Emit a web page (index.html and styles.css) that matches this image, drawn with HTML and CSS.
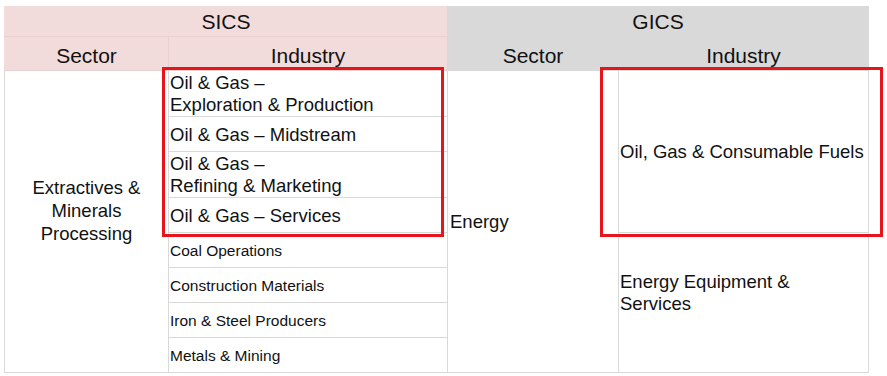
FILE: index.html
```html
<!DOCTYPE html>
<html>
<head>
<meta charset="utf-8">
<link rel="stylesheet" href="styles.css">
</head>
<body>
<div class="wrap">
<table class="map">
  <colgroup>
    <col class="c1"><col class="c2"><col class="c3"><col class="c4">
  </colgroup>
  <thead>
    <tr class="h1">
      <th colspan="2" class="sics">SICS</th>
      <th colspan="2" class="gics">GICS</th>
    </tr>
    <tr class="h2">
      <th class="sics">Sector</th>
      <th class="sics">Industry</th>
      <th class="gics">Sector</th>
      <th class="gics">Industry</th>
    </tr>
  </thead>
  <tbody>
    <tr class="r46">
      <td rowspan="8" class="ssector"><div class="ss">Extractives &amp;<br>Minerals<br>Processing</div></td>
      <td class="ind big">Oil &amp; Gas –<br>Exploration &amp; Production</td>
      <td rowspan="8" class="gsector">Energy</td>
      <td rowspan="4" class="gind big">Oil, Gas &amp; Consumable Fuels</td>
    </tr>
    <tr class="r35"><td class="ind big">Oil &amp; Gas – Midstream</td></tr>
    <tr class="r45"><td class="ind big">Oil &amp; Gas –<br>Refining &amp; Marketing</td></tr>
    <tr class="r35"><td class="ind big">Oil &amp; Gas – Services</td></tr>
    <tr class="r35">
      <td class="ind small">Coal Operations</td>
      <td rowspan="4" class="gind big"><div class="eq">Energy Equipment &amp;<br>Services</div></td>
    </tr>
    <tr class="r35"><td class="ind small">Construction Materials</td></tr>
    <tr class="r35"><td class="ind small">Iron &amp; Steel Producers</td></tr>
    <tr class="r35"><td class="ind small">Metals &amp; Mining</td></tr>
  </tbody>
</table>
<div class="hl hl-sics"></div>
<div class="hl hl-gics"></div>
</div>
</body>
</html>
```
FILE: styles.css
```css
html, body {
  margin: 0;
  padding: 0;
  background: #ffffff;
}
body {
  padding: 6px 0 0 4px;
  font-family: "Liberation Sans", Arial, sans-serif;
  color: #111111;
}
.wrap {
  position: relative;
  width: 864px;
}
.map {
  border-collapse: collapse;
  table-layout: fixed;
  width: 864px;
}
.c1 { width: 164px; }
.c2 { width: 279px; }
.c3 { width: 171px; }
.c4 { width: 250px; }

.map th {
  font-weight: normal;
  font-size: 21px;
  padding: 0;
  text-align: center;
}
.map .h1 th { height: 29px; line-height: 29px; }
.map .h2 th { height: 29px; line-height: 29px; padding-top: 4px; }
.map th.sics {
  background: #f2dcdb;
  border: 1px solid #ead0cf;
}
.map th.gics {
  background: #d9d9d9;
  border: 1px solid #d9d9d9;
}
.map .h1 th.sics { border-top-color: #f2dcdb; border-left-color: #f2dcdb; }
.map .h2 th.sics:first-child { border-left-color: #f2dcdb; }

.map td {
  border: 1px solid #d9d9d9;
  padding: 0 0 0 1px;
  vertical-align: middle;
}
.r46 { height: 46px; }
.r35 { height: 35px; }
.r45 { height: 45px; }

.map td.big { font-size: 18.5px; line-height: 22px; }
.map td.small { font-size: 15.5px; line-height: 20px; }

.map td.ind { padding-top: 1px; }
.map td.ssector {
  text-align: center;
  font-size: 18.5px;
  line-height: 23px;
  padding: 0 0 22px 0;
}
.map td.gsector {
  font-size: 18.5px;
  padding-left: 2px;
  line-height: 22px;
}
.map td.gind { padding-left: 1px; }
.eq { padding-bottom: 20px; }

.hl {
  position: absolute;
  border: 3px solid #e8141b;
  box-sizing: border-box;
}
.hl-sics {
  left: 158px;
  top: 61px;
  width: 282px;
  height: 170px;
}
.hl-gics {
  left: 596px;
  top: 61px;
  width: 283px;
  height: 170px;
}
```
